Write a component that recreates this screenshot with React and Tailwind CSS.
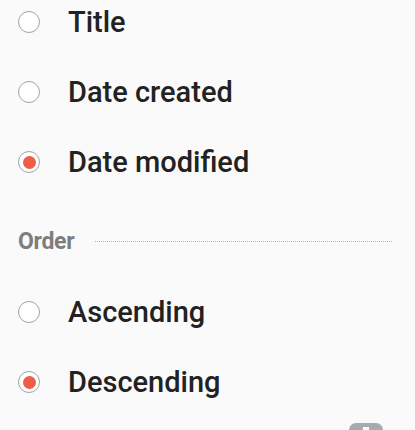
function Radio({ checked }) {
  return (
    <span className="flex h-[22px] w-[22px] shrink-0 items-center justify-center rounded-full border-[1.5px] border-[#a3a3a3] bg-white">
      {checked && <span className="h-[13px] w-[13px] rounded-full bg-[#ee5d48]" />}
    </span>
  );
}

function Option({ label, checked }) {
  return (
    <div className="flex h-[70px] items-center gap-[28px] pl-[18px]">
      <Radio checked={checked} />
      <span className="text-[29px] font-medium leading-none text-[#222222]">{label}</span>
    </div>
  );
}

export default function App() {
  return (
    <div className="h-[430px] w-[415px] overflow-hidden bg-[#fafafa] font-['Roboto',sans-serif]">
      <div className="-mt-[13px]">
        <Option label="Title" />
        <Option label="Date created" />
        <Option label="Date modified" checked />
        <div className="flex h-[80px] items-center gap-[21px] pl-[18px] pr-[23px] pt-[8px]">
          <span className="text-[23px] font-bold leading-none tracking-[-0.3px] text-[#7d7d7d]">Order</span>
          <div className="flex-1 border-t border-dotted border-[#b5b5b5]" />
        </div>
        <Option label="Ascending" />
        <Option label="Descending" checked />
        <div className="flex justify-end pr-[32px] pt-[6px]">
          <div className="flex h-[20px] w-[34px] justify-center rounded-[7px] bg-[#a7abb0] pt-[4px]">
            <div className="h-[10px] w-[6px] bg-white" />
          </div>
        </div>
      </div>
    </div>
  );
}
